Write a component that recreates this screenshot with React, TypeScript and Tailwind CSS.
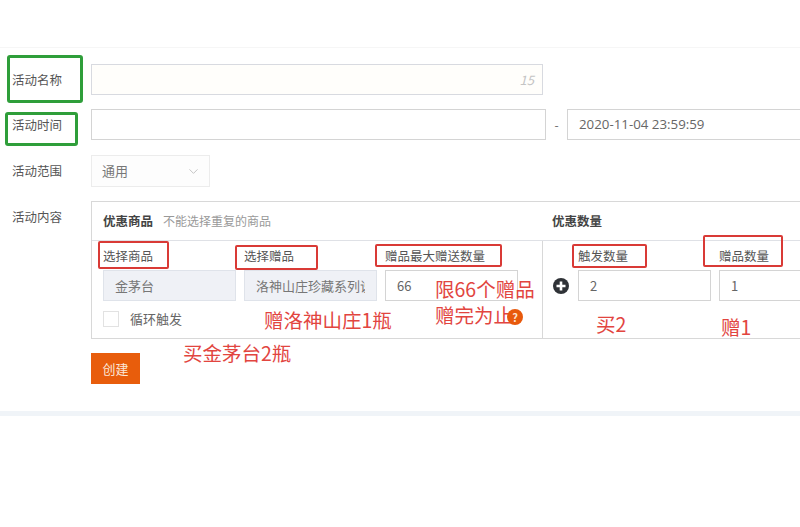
import { ChevronDown } from "lucide-react";

const font = "font-['Noto_Sans_CJK_SC','Noto_Sans',sans-serif]";

function Label({ children }: { children: string }) {
  return <div className="w-[79px] shrink-0 text-[12.5px] leading-[31px] text-[#555]">{children}</div>;
}

function Field({ value, disabled, width }: { value: string; disabled?: boolean; width: string }) {
  return (
    <div
      className={`${width} h-[31px] shrink-0 border px-[11px] text-[13px] leading-[29px] ${
        disabled ? "border-[#dfe3ea] bg-[#eff1f6] text-[#777]" : "border-[#d4d4d4] bg-white text-[#666]"
      }`}
    >
      <div className="overflow-hidden whitespace-nowrap">{value}</div>
    </div>
  );
}

function RedBox({ className }: { className: string }) {
  return <div className={`absolute rounded-[2px] border-2 border-[#d93a36] ${className}`} />;
}

function GreenBox({ className }: { className: string }) {
  return <div className={`absolute rounded-[3px] border-[3px] border-[#2f9e3a] ${className}`} />;
}

function Note({ className, children }: { className: string; children: string }) {
  return <div className={`absolute whitespace-nowrap text-[19.5px] leading-[26px] text-[#e2453f] ${className}`}>{children}</div>;
}

export default function App() {
  return (
    <div className={`relative h-[527px] w-[800px] overflow-hidden bg-white ${font}`}>
      <div className="h-[48px] border-b border-[#f6f6f6]" />

      <div className="flex h-[363px] flex-col pl-3 pt-4">
        <div className="flex">
          <Label>活动名称</Label>
          <div className="flex h-[31px] w-[452px] items-center justify-end border border-[#d8dae0] bg-[#fffefb] pr-[8px]">
            <span className="text-[13px] italic text-[#c4c4c4]">15</span>
          </div>
        </div>

        <div className="mt-[14px] flex">
          <Label>活动时间</Label>
          <div className="h-[31px] w-[455px] shrink-0 border border-[#d4d4d4]" />
          <div className="w-[21px] shrink-0 text-center text-xs leading-[31px] text-[#666]">-</div>
          <div className="h-[31px] w-[260px] shrink-0 border border-[#d4d4d4] px-[11px] font-['Open_Sans'] text-[13.3px] leading-[29px] text-[#666]">
            2020-11-04 23:59:59
          </div>
        </div>

        <div className="mt-[15px] flex">
          <Label>活动范围</Label>
          <div className="flex h-[32px] w-[119px] items-center justify-between border border-[#ececec] bg-[#fdfdfd] pl-[10px] pr-[8px] text-[13px] text-[#777]">
            通用
            <ChevronDown size={15} strokeWidth={1.25} className="text-[#b5b5b5]" />
          </div>
        </div>

        <div className="mt-[14px] flex">
          <Label>活动内容</Label>
          <div className="h-[138px] w-[760px] shrink-0 border border-[#d8d8d8]">
            <div className="flex h-[39px] items-center border-b border-[#dfe1e6] text-xs">
              <div className="flex w-[460px] shrink-0 items-center gap-[10px] pl-[11px]">
                <span className="text-[12.5px] font-bold text-[#444]">优惠商品</span>
                <span className="text-[#999]">不能选择重复的商品</span>
              </div>
              <span className="text-[12.5px] font-bold text-[#444]">优惠数量</span>
            </div>

            <div className="flex h-[97px]">
              <div className="w-[451px] shrink-0 border-r border-[#d8d8d8] pl-[11px] pt-[4px]">
                <div className="flex h-[23px] items-center text-[12.5px] text-[#555]">
                  <span className="w-[141px]">选择商品</span>
                  <span className="w-[141px]">选择赠品</span>
                  <span>赠品最大赠送数量</span>
                </div>
                <div className="mt-[2px] flex gap-[8px]">
                  <Field width="w-[133px]" value="金茅台" disabled />
                  <Field width="w-[133px]" value="洛神山庄珍藏系列说" disabled />
                  <Field width="w-[133px]" value="66" />
                </div>
                <div className="mt-[8px] flex items-center text-[13px] text-[#666]">
                  <span className="h-4 w-4 border border-[#e2e2e2]" />
                  <span className="ml-[11px]">循环触发</span>
                </div>
              </div>

              <div className="pl-[10px] pt-[4px]">
                <div className="flex h-[23px] items-center pl-[25px] text-[12.5px] text-[#555]">
                  <span className="w-[141px]">触发数量</span>
                  <span>赠品数量</span>
                </div>
                <div className="mt-[2px] flex items-center">
                  <svg viewBox="0 0 16 16" className="mr-[9px] h-4 w-4 shrink-0">
                    <circle cx="8" cy="8" r="8" fill="#2f3237" />
                    <path d="M8 3.5v9M3.5 8h9" stroke="#fff" strokeWidth="2.6" />
                  </svg>
                  <Field width="w-[133px]" value="2" />
                  <div className="w-[8px] shrink-0" />
                  <Field width="w-[133px]" value="1" />
                </div>
              </div>
            </div>
          </div>
        </div>

        <button className="ml-[79px] mt-[14px] h-[31px] w-[49px] bg-[#e85d0c] text-[13px] text-[#fbe6d8]">创建</button>
      </div>

      <div className="h-[5px] bg-[#f0f4f8]" />

      <GreenBox className="left-[7px] top-[55px] h-[48px] w-[76px]" />
      <GreenBox className="left-[5px] top-[112px] h-[34px] w-[73px]" />

      <RedBox className="left-[98px] top-[241px] h-[28px] w-[71px]" />
      <RedBox className="left-[235px] top-[245px] h-[25px] w-[83px]" />
      <RedBox className="left-[375px] top-[244px] h-[23px] w-[127px]" />
      <RedBox className="left-[572px] top-[244px] h-[24px] w-[75px]" />
      <RedBox className="left-[703px] top-[235px] h-[32px] w-[80px]" />

      <Note className="left-[264px] top-[307px]">赠洛神山庄1瓶</Note>
      <Note className="left-[183px] top-[340px]">买金茅台2瓶</Note>
      <Note className="left-[435px] top-[276px]">限66个赠品</Note>
      <Note className="left-[435px] top-[302px]">赠完为止</Note>
      <Note className="left-[596px] top-[311px]">买2</Note>
      <Note className="left-[721px] top-[314px]">赠1</Note>

      <div className="absolute left-[507px] top-[309px] flex h-4 w-4 items-center justify-center rounded-full bg-[#e8590c] text-[11px] font-bold text-[#fde3d0]">
        ?
      </div>
    </div>
  );
}
